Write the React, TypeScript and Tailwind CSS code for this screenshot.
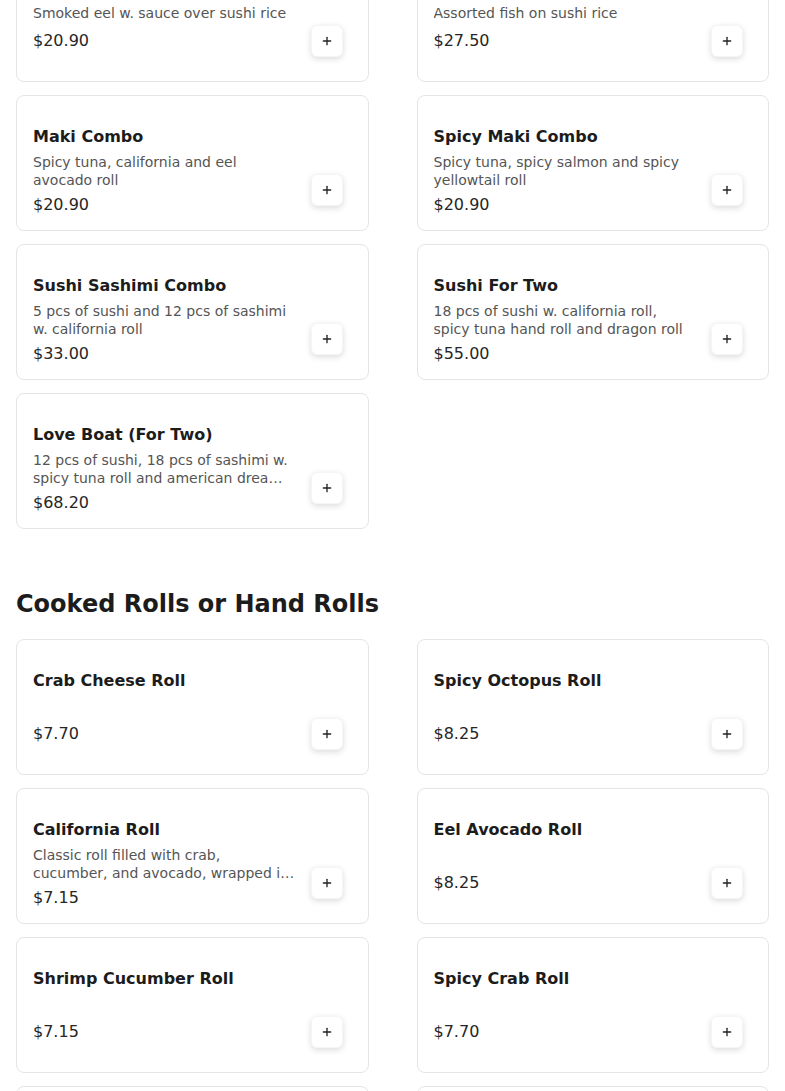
import React from "react";

type Item = { title: string; desc?: string; price: string };

const section1: Item[] = [
  { title: "Unagi Don", desc: "Smoked eel w. sauce over sushi rice", price: "$20.90" },
  { title: "Chirashi", desc: "Assorted fish on sushi rice", price: "$27.50" },
  { title: "Maki Combo", desc: "Spicy tuna, california and eel avocado roll", price: "$20.90" },
  { title: "Spicy Maki Combo", desc: "Spicy tuna, spicy salmon and spicy yellowtail roll", price: "$20.90" },
  { title: "Sushi Sashimi Combo", desc: "5 pcs of sushi and 12 pcs of sashimi w. california roll", price: "$33.00" },
  { title: "Sushi For Two", desc: "18 pcs of sushi w. california roll, spicy tuna hand roll and dragon roll", price: "$55.00" },
  { title: "Love Boat (For Two)", desc: "12 pcs of sushi, 18 pcs of sashimi w. spicy tuna roll and american dream roll", price: "$68.20" },
];

const section2: Item[] = [
  { title: "Crab Cheese Roll", price: "$7.70" },
  { title: "Spicy Octopus Roll", price: "$8.25" },
  { title: "California Roll", desc: "Classic roll filled with crab, cucumber, and avocado, wrapped in seaweed and rice", price: "$7.15" },
  { title: "Eel Avocado Roll", price: "$8.25" },
  { title: "Shrimp Cucumber Roll", price: "$7.15" },
  { title: "Spicy Crab Roll", price: "$7.70" },
  { title: "Shrimp Tempura Roll", price: "$8.80" },
  { title: "Spider Roll", price: "$9.90" },
];

function PlusIcon() {
  return (
    <svg width="16" height="16" viewBox="0 0 24 24" fill="none" stroke="#222" strokeWidth="2" strokeLinecap="round">
      <path d="M12 6.5v11" />
      <path d="M6.5 12h11" />
    </svg>
  );
}

function Card({ item }: { item: Item }) {
  return (
    <div className="flex h-[136px] rounded-lg border border-neutral-200 bg-white pl-4 pr-[25px]">
      <div className="min-w-0 flex-1 pr-4 pt-[29px]">
        <div className="text-base leading-6 font-bold text-[#1c1c1c]">{item.title}</div>
        <div className="mt-[5px] min-h-5 text-sm leading-[17.5px] text-[#555555] line-clamp-2">
          {item.desc ?? ""}
        </div>
        <div className="mt-1 text-base leading-6 text-[#262626]">{item.price}</div>
      </div>
      <div className="flex items-end pb-6">
        <button className="flex h-8 w-8 items-center justify-center rounded-md border border-neutral-100 bg-white shadow-[0_2px_6px_rgba(0,0,0,0.14)]">
          <PlusIcon />
        </button>
      </div>
    </div>
  );
}

export default function App() {
  return (
    <div className="h-[1091px] w-[785px] overflow-hidden bg-white font-['DejaVu_Sans',sans-serif]">
      <div className="mt-[-54px] px-4">
        <div className="grid grid-cols-2 gap-x-12 gap-y-[13px]">
          {section1.map((it) => (
            <Card key={it.title} item={it} />
          ))}
        </div>
        <h2 className="mt-[59px] mb-[19px] text-2xl leading-8 font-bold text-[#1c1c1c]">
          Cooked Rolls or Hand Rolls
        </h2>
        <div className="grid grid-cols-2 gap-x-12 gap-y-[13px]">
          {section2.map((it) => (
            <Card key={it.title} item={it} />
          ))}
        </div>
      </div>
    </div>
  );
}
